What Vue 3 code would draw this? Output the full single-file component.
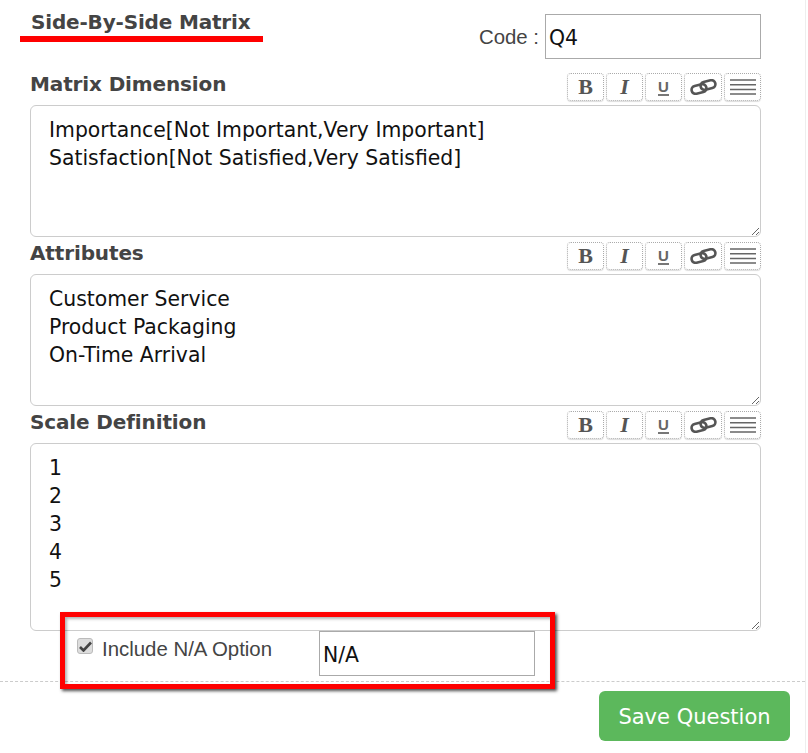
<script setup>
const tools = ['B', 'I', 'U', 'link', 'list']

const sections = [
  { label: 'Matrix Dimension', text: 'Importance[Not Important,Very Important]\nSatisfaction[Not Satisfied,Very Satisfied]', size: 'short' },
  { label: 'Attributes', text: 'Customer Service\nProduct Packaging\nOn-Time Arrival', size: 'short' },
  { label: 'Scale Definition', text: '1\n2\n3\n4\n5', size: 'tall' }
]
</script>

<template>
  <div class="page">
    <div class="top">
      <h2 class="title">Side-By-Side Matrix</h2>
      <div class="code">
        <label class="code-label">Code :</label>
        <input class="field" value="Q4" />
      </div>
    </div>

    <div v-for="s in sections" :key="s.label" class="section">
      <div class="section-head">
        <span class="section-label">{{ s.label }}</span>
        <div class="toolbar">
          <span v-for="t in tools" :key="t" class="tool" :class="'tool-' + t">
            <svg v-if="t === 'link'" width="27" height="16" viewBox="0 0 27 16" fill="none" stroke="#555" stroke-width="2.6">
              <rect x="1.5" y="6" width="15" height="8" rx="4" transform="rotate(-14 9 10)" />
              <rect x="10.5" y="2" width="15" height="8" rx="4" transform="rotate(-14 18 6)" />
            </svg>
            <svg v-else-if="t === 'list'" width="26" height="18" viewBox="0 0 26 18" fill="none" stroke="#666" stroke-width="1.5">
              <path d="M0 2h26M0 6.7h26M0 11.4h26M0 16h26" />
            </svg>
            <span v-else class="glyph">{{ t }}</span>
          </span>
        </div>
      </div>
      <textarea class="editor" :class="s.size" :value="s.text" spellcheck="false"></textarea>
    </div>

    <div class="na-row">
      <span class="check">
        <svg width="13" height="11" viewBox="0 0 13 11"><path d="M1 6l3.5 3.5L12 1.5" fill="none" stroke="#444" stroke-width="2.6" /></svg>
      </span>
      <span class="na-label">Include N/A Option</span>
      <input class="field na-field" value="N/A" />
    </div>

    <div class="footer">
      <button class="save">Save Question</button>
    </div>

    <!-- annotations drawn on top of the screenshot -->
    <div class="mark-line"></div>
    <div class="mark-box"></div>
  </div>
</template>

<style>
html, body {
  background: #fff;
  overflow: hidden;
}
</style>

<style scoped>
.page {
  position: relative;
  box-sizing: border-box;
  width: 806px;
  height: 753px;
  padding: 0 44px 0 30px;
  border-right: 1px solid #eee;
  font-family: "DejaVu Sans", Verdana, sans-serif;
  color: #444;
}

.top {
  display: flex;
  justify-content: space-between;
  height: 68px;
  padding-top: 14px;
  box-sizing: border-box;
}

.title {
  margin: -4px 0 0 1px;
  font-size: 20px;
  line-height: 24px;
  font-weight: bold;
  letter-spacing: -0.17px;
}

.code {
  display: flex;
  gap: 6px;
}

.code-label {
  font-family: "Liberation Sans", Arial, sans-serif;
  font-size: 20.4px;
  line-height: 46px;
}

.field {
  box-sizing: border-box;
  width: 216px;
  height: 45px;
  padding: 2px 3px 0;
  border: 1px solid #aaa;
  border-radius: 0;
  outline: none;
  background: #fff;
  color: #111;
  font-family: "DejaVu Sans", Verdana, sans-serif;
  font-size: 20.4px;
}

.section-head {
  display: flex;
  justify-content: space-between;
  align-items: flex-start;
  height: 37px;
}

.section-label {
  margin-top: 4px;
  font-size: 20px;
  font-weight: bold;
  line-height: 24px;
  letter-spacing: -0.13px;
}

.toolbar {
  display: flex;
  gap: 2px;
  margin-top: 5px;
}

.tool {
  display: flex;
  align-items: center;
  justify-content: center;
  box-sizing: border-box;
  width: 37px;
  height: 28px;
  border: 1px dotted #aaa;
  border-radius: 4px;
  box-shadow: 0 1px 1px #ddd;
  color: #555;
  font-family: "Liberation Serif", serif;
  font-size: 22px;
  font-weight: bold;
}

.tool-link {
  width: 38px;
}

.tool-I {
  font-style: italic;
}

.tool-U {
  font-family: "Liberation Sans", sans-serif;
  font-size: 15px;
  color: #666;
}

.tool-U .glyph {
  border-bottom: 2px solid #777;
  line-height: 15px;
}

.editor {
  display: block;
  box-sizing: border-box;
  width: 100%;
  margin: 0;
  padding: 10px 18px;
  border: 1px solid #ccc;
  border-radius: 6px;
  outline: none;
  color: #111;
  font-family: "DejaVu Sans", Verdana, sans-serif;
  font-size: 20.4px;
  line-height: 28px;
}

.short {
  height: 132px;
}

.tall {
  height: 188px;
}

.na-row {
  display: flex;
  height: 50px;
  padding-left: 47px;
}

.check {
  display: flex;
  align-items: center;
  justify-content: center;
  box-sizing: border-box;
  width: 16px;
  height: 16px;
  margin-top: 7px;
  border: 1px solid #bbb;
  border-radius: 3px;
  background: #ddd;
}

.na-label {
  margin-left: 9px;
  width: 217px;
  font-family: "Liberation Sans", Arial, sans-serif;
  font-size: 20.4px;
  line-height: 36px;
  color: #444;
}

.na-field {
  height: 45px;
}

.footer {
  display: flex;
  justify-content: flex-end;
  margin: 0 -44px 0 -30px;
  padding: 9px 15px 0 0;
  border-top: 1px dashed #ccc;
}

.save {
  width: 191px;
  height: 50px;
  padding-top: 3px;
  border: none;
  border-radius: 6px;
  background: #5cb85c;
  color: #fff;
  font-family: "DejaVu Sans", Verdana, sans-serif;
  font-size: 21px;
}

.mark-line {
  position: absolute;
  left: 20px;
  top: 36px;
  width: 243px;
  height: 6px;
  background: #f00;
}

.mark-box {
  position: absolute;
  left: 60px;
  top: 612px;
  box-sizing: border-box;
  width: 495px;
  height: 77px;
  border: 5px solid #f00;
  box-shadow: 2px 2px 3px rgba(0, 0, 0, 0.7), inset 2px 2px 3px rgba(0, 0, 0, 0.3);
}
</style>
